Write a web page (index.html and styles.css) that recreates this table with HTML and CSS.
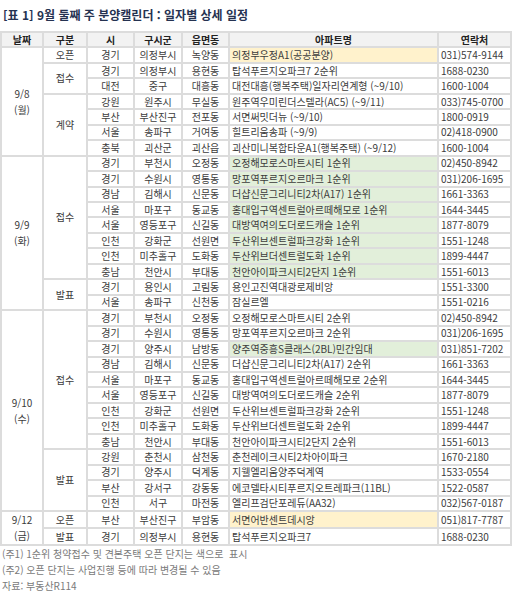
FILE: index.html
```html
<!DOCTYPE html>
<html lang="ko">
<head>
<meta charset="utf-8">
<link rel="stylesheet" href="styles.css">
</head>
<body>
<div class="page">
  <h1 class="title">[표 1] 9월 둘째 주 분양캘린더 : 일자별 상세 일정</h1>
  <table class="cal">
    <colgroup>
      <col class="c-date"><col class="c-type"><col class="c-si"><col class="c-gu"><col class="c-dong"><col class="c-apt"><col class="c-tel">
    </colgroup>
    <thead>
      <tr><th>날짜</th><th>구분</th><th>시</th><th>구시군</th><th>읍면동</th><th>아파트명</th><th>연락처</th></tr>
    </thead>
    <tbody>
      <tr><td class="date" rowspan="7">9/8<br>(월)</td><td class="type">오픈</td><td>경기</td><td>의정부시</td><td>녹양동</td><td class="apt open">의정부우정A1(공공분양)</td><td class="tel">031)574-9144</td></tr>
      <tr><td class="type" rowspan="2">접수</td><td>경기</td><td>의정부시</td><td>용현동</td><td class="apt">탑석푸르지오파크7 2순위</td><td class="tel">1688-0230</td></tr>
      <tr><td>대전</td><td>중구</td><td>대흥동</td><td class="apt">대전대흥(행복주택)일자리연계형 (~9/10)</td><td class="tel">1600-1004</td></tr>
      <tr><td class="type" rowspan="4">계약</td><td>강원</td><td>원주시</td><td>무실동</td><td class="apt">원주역우미린더스텔라(AC5) (~9/11)</td><td class="tel">033)745-0700</td></tr>
      <tr><td>부산</td><td>부산진구</td><td>전포동</td><td class="apt">서면써밋더뉴 (~9/10)</td><td class="tel">1800-0919</td></tr>
      <tr><td>서울</td><td>송파구</td><td>거여동</td><td class="apt">힐트리움송파 (~9/9)</td><td class="tel">02)418-0900</td></tr>
      <tr><td>충북</td><td>괴산군</td><td>괴산읍</td><td class="apt">괴산미니복합타운A1(행복주택) (~9/12)</td><td class="tel">1600-1004</td></tr>

      <tr><td class="date" rowspan="10">9/9<br>(화)</td><td class="type" rowspan="8">접수</td><td>경기</td><td>부천시</td><td>오정동</td><td class="apt first">오정해모로스마트시티 1순위</td><td class="tel">02)450-8942</td></tr>
      <tr><td>경기</td><td>수원시</td><td>영통동</td><td class="apt first">망포역푸르지오르마크 1순위</td><td class="tel">031)206-1695</td></tr>
      <tr><td>경남</td><td>김해시</td><td>신문동</td><td class="apt first">더샵신문그리니티2차(A17) 1순위</td><td class="tel">1661-3363</td></tr>
      <tr><td>서울</td><td>마포구</td><td>동교동</td><td class="apt first">홍대입구역센트럴아르떼해모로 1순위</td><td class="tel">1644-3445</td></tr>
      <tr><td>서울</td><td>영등포구</td><td>신길동</td><td class="apt first">대방역여의도더로드캐슬 1순위</td><td class="tel">1877-8079</td></tr>
      <tr><td>인천</td><td>강화군</td><td>선원면</td><td class="apt first">두산위브센트럴파크강화 1순위</td><td class="tel">1551-1248</td></tr>
      <tr><td>인천</td><td>미추홀구</td><td>도화동</td><td class="apt first">두산위브더센트럴도화 1순위</td><td class="tel">1899-4447</td></tr>
      <tr><td>충남</td><td>천안시</td><td>부대동</td><td class="apt first">천안아이파크시티2단지 1순위</td><td class="tel">1551-6013</td></tr>
      <tr><td class="type" rowspan="2">발표</td><td>경기</td><td>용인시</td><td>고림동</td><td class="apt">용인고진역대광로제비앙</td><td class="tel">1551-3300</td></tr>
      <tr><td>서울</td><td>송파구</td><td>신천동</td><td class="apt">잠실르엘</td><td class="tel">1551-0216</td></tr>

      <tr><td class="date" rowspan="13">9/10<br>(수)</td><td class="type" rowspan="9">접수</td><td>경기</td><td>부천시</td><td>오정동</td><td class="apt">오정해모로스마트시티 2순위</td><td class="tel">02)450-8942</td></tr>
      <tr><td>경기</td><td>수원시</td><td>영통동</td><td class="apt">망포역푸르지오르마크 2순위</td><td class="tel">031)206-1695</td></tr>
      <tr><td>경기</td><td>양주시</td><td>남방동</td><td class="apt first">양주역중흥S클래스(2BL)민간임대</td><td class="tel">031)851-7202</td></tr>
      <tr><td>경남</td><td>김해시</td><td>신문동</td><td class="apt">더샵신문그리니티2차(A17) 2순위</td><td class="tel">1661-3363</td></tr>
      <tr><td>서울</td><td>마포구</td><td>동교동</td><td class="apt">홍대입구역센트럴아르떼해모로 2순위</td><td class="tel">1644-3445</td></tr>
      <tr><td>서울</td><td>영등포구</td><td>신길동</td><td class="apt">대방역여의도더로드캐슬 2순위</td><td class="tel">1877-8079</td></tr>
      <tr><td>인천</td><td>강화군</td><td>선원면</td><td class="apt">두산위브센트럴파크강화 2순위</td><td class="tel">1551-1248</td></tr>
      <tr><td>인천</td><td>미추홀구</td><td>도화동</td><td class="apt">두산위브더센트럴도화 2순위</td><td class="tel">1899-4447</td></tr>
      <tr><td>충남</td><td>천안시</td><td>부대동</td><td class="apt">천안아이파크시티2단지 2순위</td><td class="tel">1551-6013</td></tr>
      <tr><td class="type" rowspan="4">발표</td><td>강원</td><td>춘천시</td><td>삼천동</td><td class="apt">춘천레이크시티2차아이파크</td><td class="tel">1670-2180</td></tr>
      <tr><td>경기</td><td>양주시</td><td>덕계동</td><td class="apt">지웰엘리움양주덕계역</td><td class="tel">1533-0554</td></tr>
      <tr><td>부산</td><td>강서구</td><td>강동동</td><td class="apt">에코델타시티푸르지오트레파크(11BL)</td><td class="tel">1522-0587</td></tr>
      <tr><td>인천</td><td>서구</td><td>마전동</td><td class="apt">엘리프검단포레듀(AA32)</td><td class="tel">032)567-0187</td></tr>

      <tr><td class="date" rowspan="2">9/12<br>(금)</td><td class="type">오픈</td><td>부산</td><td>부산진구</td><td>부암동</td><td class="apt open">서면어반센트데시앙</td><td class="tel">051)817-7787</td></tr>
      <tr><td class="type">발표</td><td>경기</td><td>의정부시</td><td>용현동</td><td class="apt">탑석푸르지오파크7</td><td class="tel">1688-0230</td></tr>
    </tbody>
  </table>
  <div class="notes">
    <p>(주1) 1순위 청약접수 및 견본주택 오픈 단지는 색으로&nbsp;&nbsp;표시</p>
    <p>(주2) 오픈 단지는 사업진행 등에 따라 변경될 수 있음</p>
    <p>자료: 부동산R114</p>
  </div>
</div>
</body>
</html>
```

FILE: styles.css
```css
html, body {
  margin: 0;
  padding: 0;
  background: #ffffff;
}
body {
  font-family: "Noto Sans CJK KR", "Noto Sans", sans-serif;
  color: #3c3c3c;
}
.page {
  width: 512px;
}
.title {
  margin: 0;
  height: 31px;
  box-sizing: border-box;
  padding: 6px 0 0 3px;
  font-size: 12px;
  line-height: 17px;
  font-weight: 700;
  color: #253251;
}
.cal {
  border-collapse: collapse;
  table-layout: fixed;
  width: 510px;
  font-size: 10px;
  line-height: 12px;
}
.c-date { width: 42px; }
.c-type { width: 44px; }
.c-si { width: 47px; }
.c-gu { width: 48px; }
.c-dong { width: 47px; }
.c-apt { width: 209px; }
.c-tel { width: 73px; }
.cal tr {
  height: 15.46px;
}
.cal th, .cal td {
  border: 2px solid #dcdcdc;
  padding: 0;
  text-align: center;
  white-space: nowrap;
  overflow: hidden;
}
.cal th {
  background: #f2f2f2;
  color: #222222;
  font-weight: 700;
}
.cal td.date {
  line-height: 16px;
}
.cal td.apt, .cal td.tel {
  text-align: left;
  padding-left: 2px;
}
.cal td.open {
  background: #fff2cc;
}
.cal td.first {
  background: #e2efda;
}
.notes {
  padding-top: 0;
  font-size: 10px;
  line-height: 16px;
  color: #7a7a7a;
}
.notes p {
  margin: 0 0 0 2px;
}
```
